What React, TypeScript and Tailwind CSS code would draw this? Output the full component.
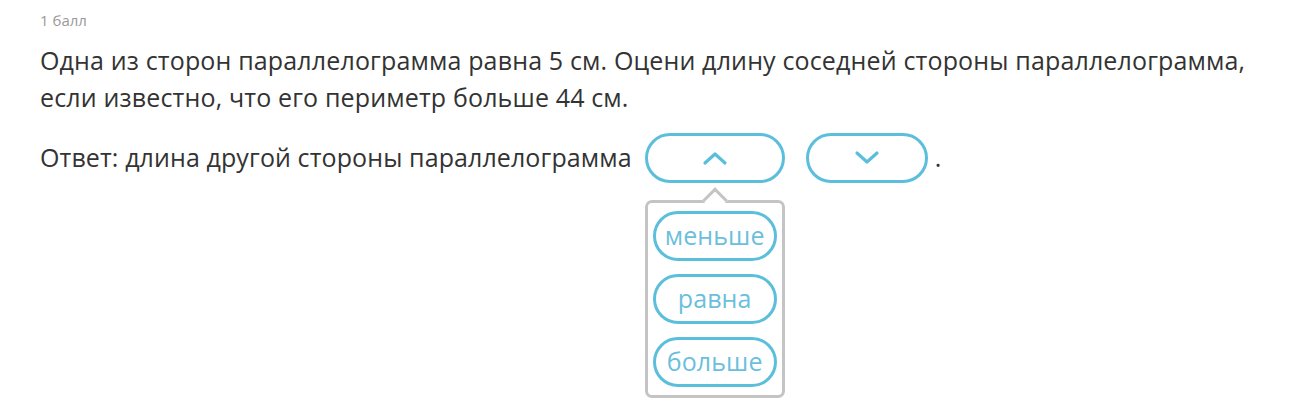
import React from 'react';

const options = ['меньше', 'равна', 'больше'];

const Chevron: React.FC<{ up?: boolean }> = ({ up }) => (
    <svg width="26" height="16" viewBox="0 0 26 16" fill="none">
        <path
            d={up ? 'M3 13 L13 4 L23 13' : 'M3 3 L13 12 L23 3'}
            stroke="#5bbfdc"
            strokeWidth="3.2"
            strokeLinecap="round"
            strokeLinejoin="round"
        />
    </svg>
);

const App: React.FC = () => {
    return (
        <div
            className="w-[1290px] h-[418px] bg-white pl-10 pt-[10px] text-[#333]"
            style={{ fontFamily: '"Open Sans", "Noto Sans", sans-serif' }}
        >
            <div className="text-[15px] leading-[20px] text-[#999]">1 балл</div>

            <p className="mt-[12px] text-[25px] leading-[37px] tracking-[0.15px] text-[#333]">
                Одна из сторон параллелограмма равна 5 см. Оцени длину соседней стороны параллелограмма,
                <br />
                если известно, что его периметр больше 44 см.
            </p>

            <div className="mt-[17px] flex items-center text-[25px] tracking-[0.1px]">
                <span>Ответ: длина другой стороны параллелограмма</span>

                <div className="relative ml-[13px]">
                    <button className="flex h-[50px] w-[140px] items-center justify-center rounded-full border-[3px] border-[#5bbfdc] bg-white">
                        <Chevron up />
                    </button>

                    {/* dropdown */}
                    <div className="absolute left-0 top-[67px] w-[140px] rounded-[7px] border-[3px] border-[#c4c4c4] bg-white px-[5px] pt-[8px] pb-[8px]">
                        <div className="absolute -top-[12px] left-[58px] h-[18px] w-[18px] rotate-45 border-l-[3px] border-t-[3px] border-[#c4c4c4] bg-white" />
                        <div className="relative flex flex-col gap-[13px]">
                            {options.map((opt) => (
                                <button
                                    key={opt}
                                    className="flex h-[50px] w-[124px] items-center justify-center rounded-full border-[3px] border-[#5bbfdc] bg-white text-[25px] text-[#6bbfdc]"
                                >
                                    {opt}
                                </button>
                            ))}
                        </div>
                    </div>
                </div>

                <button className="ml-[21px] flex h-[50px] w-[122px] items-center justify-center rounded-full border-[3px] border-[#5bbfdc] bg-white">
                    <Chevron />
                </button>
                <span className="ml-[7px]">.</span>
            </div>
        </div>
    );
};

export default App;
